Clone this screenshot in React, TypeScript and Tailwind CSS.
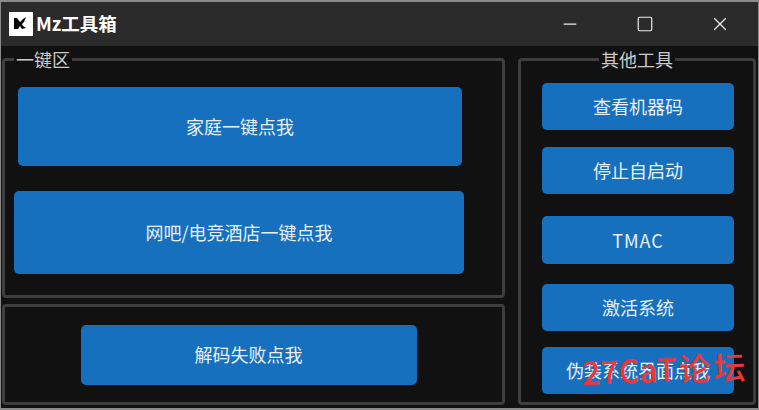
import { Minus, Square, X } from "lucide-react";

const font = "font-['Noto_Sans_CJK_SC','Noto_Sans',sans-serif]";

function Btn({ label, className }: { label: string; className: string }) {
  return (
    <button className={`flex items-center justify-center rounded-[5px] bg-[#1770bd] text-[18px] text-[#e8f0f8] ${className}`}>
      {label}
    </button>
  );
}

export default function App() {
  return (
    <div className={`relative flex h-[410px] w-[759px] flex-col overflow-hidden border-x border-t-2 border-b-2 border-[#8a8a8a] bg-[#111111] ${font}`}>
      <header className="flex h-[44px] shrink-0 items-center bg-[#2b2b2b] pl-[8px]">
        <div className="flex h-[24px] w-[24px] items-center justify-center bg-white">
          <svg width="14" height="14" viewBox="0 0 14 14">
            <path d="M0 1h3l3 4 3-3 3-2-2 5-2 2 1 2 3 2-4 1-2-3-2 3H0z" fill="#000" />
          </svg>
        </div>
        <span className="ml-[3px] text-[18.5px] font-bold text-white">Mz工具箱</span>
        <div className="ml-auto flex items-center text-[#eeeeee]">
          <Minus size={20} strokeWidth={1.5} className="mr-[56px]" />
          <Square size={18} strokeWidth={1.6} className="mr-[55px]" />
          <X size={22} strokeWidth={1.3} className="mr-[27px]" />
        </div>
      </header>

      <main className="flex flex-1 pl-[1px] pt-[3px]">
        <div className="flex w-[503px] flex-col">
          <fieldset className="h-[249px] rounded-[4px] border-[3px] border-[#3e3e3e] px-[9px] pb-[20px]">
            <legend className="px-[2px] text-[18px] leading-[20px] text-[#cccccc]">一键区</legend>
            <Btn label="家庭一键点我" className="ml-[4px] mt-[18px] h-[79px] w-[444px]" />
            <Btn label="网吧/电竞酒店一键点我" className="mt-[25px] h-[83px] w-[450px]" />
          </fieldset>
          <div className="mt-[6px] flex h-[101px] items-center justify-center rounded-[4px] border-[3px] border-[#3e3e3e]">
            <Btn label="解码失败点我" className="mr-[10px] h-[60px] w-[336px]" />
          </div>
        </div>

        <fieldset className="ml-[13px] h-[356px] w-[238px] rounded-[4px] border-[3px] border-[#3e3e3e] pl-[21px]">
          <legend className="ml-[57px] px-[2px] text-[18px] leading-[20px] text-[#cccccc]">其他工具</legend>
          <div className="mt-[14px] flex flex-col">
            <Btn label="查看机器码" className="h-[47px] w-[192px]" />
            <Btn label="停止自启动" className="mt-[17px] h-[47px] w-[192px]" />
            <Btn label="TMAC" className="mt-[22px] h-[48px] w-[192px] tracking-[1px]" />
            <Btn label="激活系统" className="mt-[20px] h-[47px] w-[192px]" />
            <Btn label="伪装系统界面点我" className="mt-[16px] h-[47px] w-[192px]" />
          </div>
        </fieldset>
      </main>

      <span className="absolute left-[581px] top-[346px] -rotate-2 text-[32px] font-medium leading-[40px] text-[#e8383a]">
        27CaT<span className="ml-[2px] tracking-[3px]">论坛</span>
      </span>
    </div>
  );
}
